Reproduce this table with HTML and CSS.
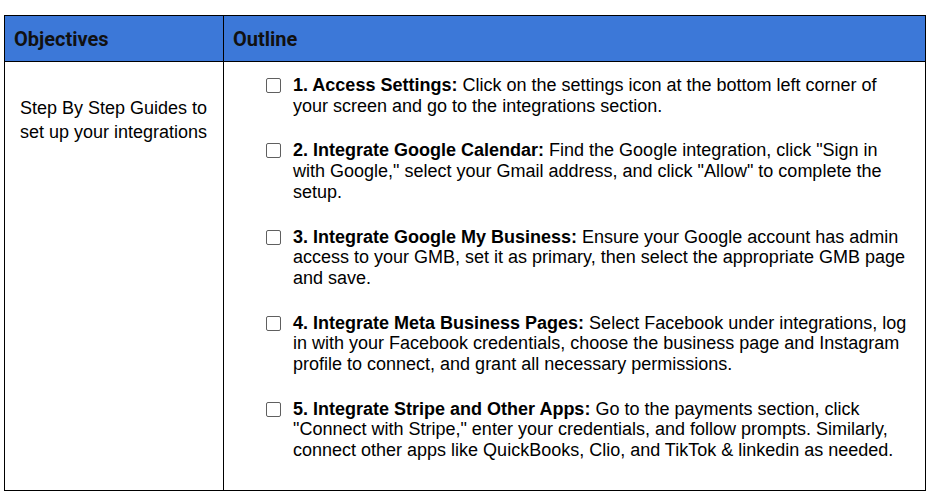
FILE: index.html
```html
<!DOCTYPE html>
<html>
<head>
<meta charset="utf-8">
<link rel="stylesheet" href="styles.css">
</head>
<body>
<table class="grid">
  <thead>
    <tr>
      <th class="col-obj">Objectives</th>
      <th class="col-out">Outline</th>
    </tr>
  </thead>
  <tbody>
    <tr>
      <td class="obj">Step By Step Guides to set up your integrations</td>
      <td class="out">
        <ul class="steps">
          <li class="step"><span class="box"></span><p class="txt"><b>1. Access Settings:</b> Click on the settings icon at the bottom left corner of your screen and go to the integrations section.</p></li>
          <li class="step"><span class="box"></span><p class="txt"><b>2. Integrate Google Calendar:</b> Find the Google integration, click "Sign in with Google," select your Gmail address, and click "Allow" to complete the setup.</p></li>
          <li class="step"><span class="box"></span><p class="txt"><b>3. Integrate Google My Business:</b> Ensure your Google account has admin access to your GMB, set it as primary, then select the appropriate GMB page and save.</p></li>
          <li class="step"><span class="box"></span><p class="txt"><b>4. Integrate Meta Business Pages:</b> Select Facebook under integrations, log in with your Facebook credentials, choose the business page and Instagram profile to connect, and grant all necessary permissions.</p></li>
          <li class="step"><span class="box"></span><p class="txt"><b>5. Integrate Stripe and Other Apps:</b> Go to the payments section, click "Connect with Stripe," enter your credentials, and follow prompts. Similarly, connect other apps like QuickBooks, Clio, and TikTok &amp; linkedin as needed.</p></li>
        </ul>
      </td>
    </tr>
  </tbody>
</table>
</body>
</html>
```

FILE: styles.css
```css
html, body {
  margin: 0;
  padding: 0;
  background: #ffffff;
}
body {
  font-family: "Liberation Sans", Arial, sans-serif;
  font-size: 18px;
  color: #000;
}
.grid {
  border-collapse: collapse;
  margin: 15px 0 0 4px;
  width: 922px;
  table-layout: fixed;
}
.grid th, .grid td {
  border: 1px solid #000;
}
.grid th {
  background: #3c78d8;
  color: #111;
  font-family: Roboto, "Liberation Sans", sans-serif;
  font-weight: 700;
  font-size: 20px;
  text-align: left;
  height: 46px;
  padding: 0 9px;
  box-sizing: border-box;
  vertical-align: middle;
}
.col-obj { width: 219px; }
.obj {
  vertical-align: top;
  padding: 34px 8px 0 15px;
  line-height: 24px;
}
.out {
  vertical-align: top;
  padding: 13px 13px 29px 42px;
}
.steps {
  list-style: none;
  margin: 0;
  padding: 0;
  display: flex;
  flex-direction: column;
  gap: 24px;
}
.step {
  display: flex;
  align-items: flex-start;
  gap: 12px;
  line-height: 20.7px;
}
.box {
  flex: none;
  width: 15px;
  height: 15px;
  box-sizing: border-box;
  border: 1.5px solid #5f5f5f;
  border-radius: 2px;
  margin-top: 3px;
}
.txt {
  margin: 0;
  flex: 1;
}
```
